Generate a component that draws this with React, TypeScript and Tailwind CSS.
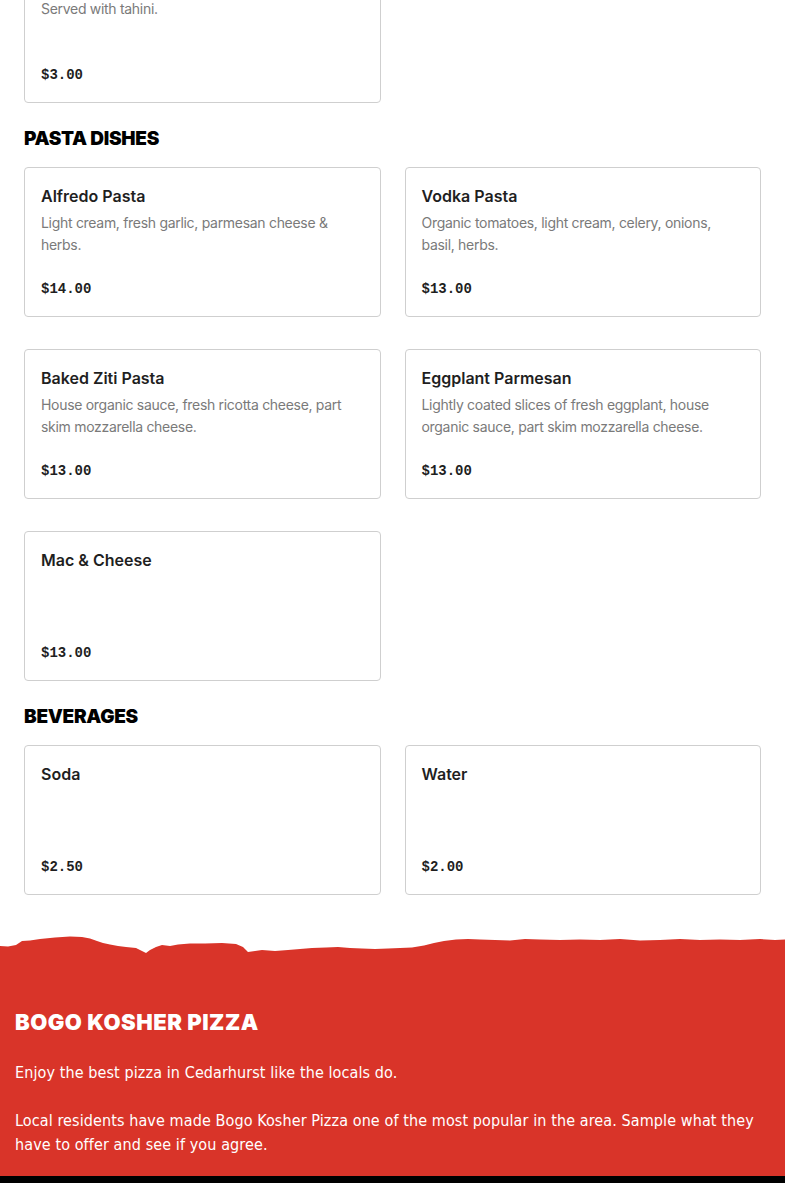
import React from 'react';

type Item = { name: string; desc?: string; price: string };

const pasta: Item[] = [
  { name: 'Alfredo Pasta', desc: 'Light cream, fresh garlic, parmesan cheese & herbs.', price: '$14.00' },
  { name: 'Vodka Pasta', desc: 'Organic tomatoes, light cream, celery, onions, basil, herbs.', price: '$13.00' },
  { name: 'Baked Ziti Pasta', desc: 'House organic sauce, fresh ricotta cheese, part skim mozzarella cheese.', price: '$13.00' },
  { name: 'Eggplant Parmesan', desc: 'Lightly coated slices of fresh eggplant, house organic sauce, part skim mozzarella cheese.', price: '$13.00' },
  { name: 'Mac & Cheese', price: '$13.00' },
];

const beverages: Item[] = [
  { name: 'Soda', price: '$2.50' },
  { name: 'Water', price: '$2.00' },
];

function Card({ item }: { item: Item }) {
  return (
    <div className="h-[150px] rounded-[4px] border border-[#cfcfcf] bg-white px-4 pt-[16px] pb-[17px] flex flex-col justify-between">
      <div>
        <div className="text-[16px] leading-[24px] font-semibold text-[#1f1f1f] font-['Inter',sans-serif]">{item.name}</div>
        {item.desc && (
          <p className="mt-[4px] text-[14px] leading-[22px] tracking-[-0.3px] text-[#7a7a7a] font-['Inter',sans-serif]">{item.desc}</p>
        )}
      </div>
      <div className="text-[14px] leading-[20px] font-bold text-[#1f1f1f] font-['Liberation_Mono',monospace]">{item.price}</div>
    </div>
  );
}

function Heading({ children }: { children: React.ReactNode }) {
  return (
    <h2 className="text-[19px] leading-[24px] font-black uppercase text-black font-['Inter',sans-serif] tracking-[-0.3px] mb-4">
      {children}
    </h2>
  );
}

function TornEdge() {
  return (
    <svg viewBox="0 0 785 26" preserveAspectRatio="none" className="block w-full h-[26px]">
      <path
        fill="#d93429"
        d="M0 16 L8 16.5 L16 15 L22 11 L30 10.5 L40 9 L55 7.5 L70 6.5 L82 7 L90 8.5 L97 11 L103 13 L110 14.5 L118 16 L126 17 L136 18 L142 21 L146 23 L150 20 L156 17 L162 15 L170 16 L178 14.5 L190 13.5 L205 13.5 L222 13 L236 14 L243 17 L248 22 L255 21 L262 20 L275 21 L288 20 L300 19 L312 18 L326 17.5 L338 17 L350 18 L362 18.5 L375 19 L388 18.5 L400 18 L412 17.5 L424 15.5 L434 13 L444 11 L456 9.5 L468 9 L480 9.5 L495 10 L510 10.5 L525 9 L540 9.5 L560 10 L580 9.5 L600 10 L620 9 L640 10.5 L660 10 L680 9 L700 10 L720 9.5 L740 10 L760 9 L775 10 L785 9.5 L785 26 L0 26 Z"
      />
    </svg>
  );
}

export default function App() {
  return (
    <div className="w-[785px] min-h-[1183px] bg-white overflow-hidden">
      <div className="px-6">
        <div className="-mt-[47px] grid grid-cols-2 gap-x-6">
          <Card item={{ name: 'Falafel', desc: 'Served with tahini.', price: '$3.00' }} />
        </div>

        <div className="mt-6">
          <Heading>Pasta Dishes</Heading>
          <div className="grid grid-cols-2 gap-x-6 gap-y-8">
            {pasta.map((p) => (
              <Card key={p.name} item={p} />
            ))}
          </div>
        </div>

        <div className="mt-6">
          <Heading>Beverages</Heading>
          <div className="grid grid-cols-2 gap-x-6 gap-y-8">
            {beverages.map((p) => (
              <Card key={p.name} item={p} />
            ))}
          </div>
        </div>
      </div>

      <div className="mt-[35px]">
        <TornEdge />
        <div className="bg-[#d93429] px-[15px] pt-[52px] pb-[19px] text-white">
          <h3 className="text-[22px] leading-[28px] font-black uppercase font-['Inter',sans-serif] tracking-[0.5px]">Bogo Kosher Pizza</h3>
          <p className="mt-[25px] text-[16px] leading-[24px] tracking-[0.1px] font-['Liberation_Sans_Narrow','DejaVu_Sans_Condensed',sans-serif]">
            Enjoy the best pizza in Cedarhurst like the locals do.
          </p>
          <p className="mt-[24px] text-[16px] leading-[24px] tracking-[0.1px] font-['Liberation_Sans_Narrow','DejaVu_Sans_Condensed',sans-serif]">
            Local residents have made Bogo Kosher Pizza one of the most popular in the area. Sample what they have to offer and see if you agree.
          </p>
        </div>
        <div className="bg-black h-[40px]" />
      </div>
    </div>
  );
}
